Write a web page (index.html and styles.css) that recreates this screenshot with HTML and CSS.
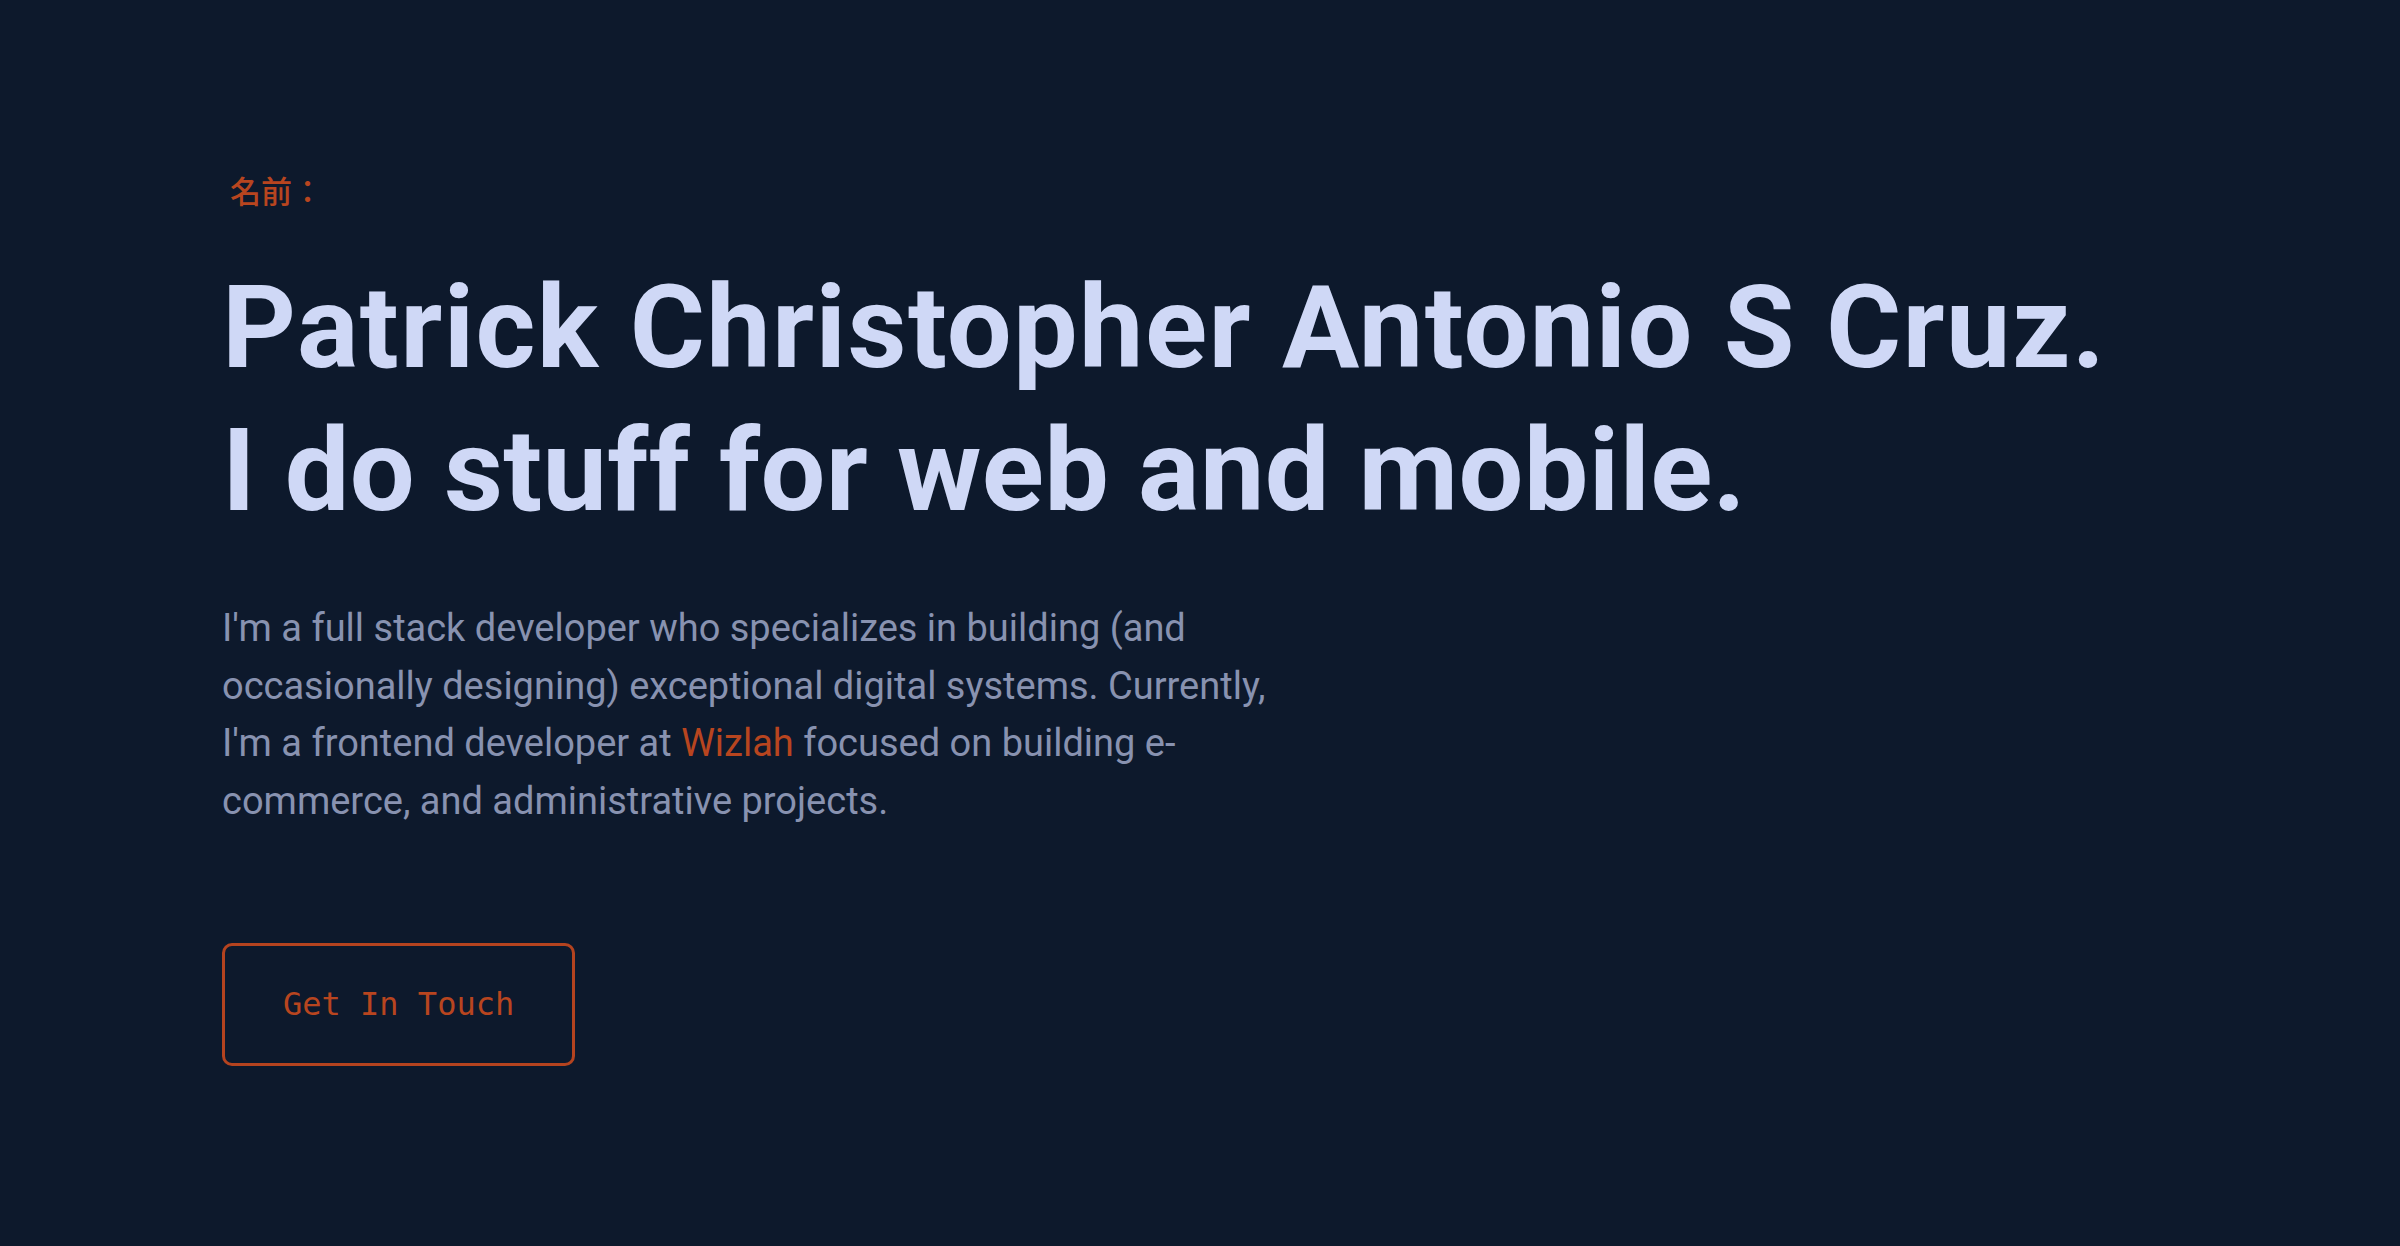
FILE: index.html
```html
<!DOCTYPE html>
<html lang="en">
<head>
<meta charset="utf-8">
<title>Patrick Christopher Antonio S Cruz</title>
<link rel="stylesheet" href="styles.css">
</head>
<body>
<main class="page">
  <section class="hero">
    <h1 class="hero-label">名前：</h1>
    <h2 class="hero-title hero-title-name">Patrick Christopher Antonio S Cruz.</h2>
    <h3 class="hero-title hero-title-tagline">I do stuff for web and mobile.</h3>
    <p class="hero-text">I'm a full stack developer who specializes in building (and occasionally designing) exceptional digital systems. Currently, I'm a frontend developer at <a class="link" href="#">Wizlah</a> focused on building e-commerce, and administrative projects.</p>
    <a class="btn" href="#">Get In Touch</a>
  </section>
</main>
</body>
</html>
```

FILE: styles.css
```css
html, body {
  margin: 0;
  padding: 0;
  background: #0d192c;
}

body {
  min-height: 1246px;
  font-family: Roboto, "Liberation Sans", sans-serif;
}

.page {
  padding: 171px 0 0 222px;
}

.hero {
  display: flex;
  flex-direction: column;
  align-items: flex-start;
}

.hero-label {
  margin: 0 0 47px 8px;
  font-family: "Noto Sans CJK JP", "Noto Sans", sans-serif;
  font-size: 31px;
  line-height: 38px;
  font-weight: 500;
  color: #b8451f;
}

.hero-title {
  margin: 0;
  font-family: Roboto, "Liberation Sans", sans-serif;
  font-size: 115px;
  line-height: 143px;
  font-weight: 700;
  color: #cfd8f6;
  white-space: nowrap;
}

.hero-title-name {
  letter-spacing: 1.4px;
}

.hero-title-tagline {
  letter-spacing: 0.3px;
}

.hero-text {
  margin: 58px 0 0 0;
  max-width: 1060px;
  font-size: 38px;
  line-height: 57.5px;
  font-weight: 400;
  color: #8892b0;
}

.link {
  color: #b8451f;
  text-decoration: none;
}

.btn {
  margin-top: 113px;
  display: inline-block;
  padding: 42px 58px 43px;
  border: 3px solid #b4431f;
  border-radius: 10px;
  font-family: "DejaVu Sans Mono", "Liberation Mono", monospace;
  font-size: 32px;
  line-height: 32px;
  color: #b8451f;
  text-decoration: none;
}
```
